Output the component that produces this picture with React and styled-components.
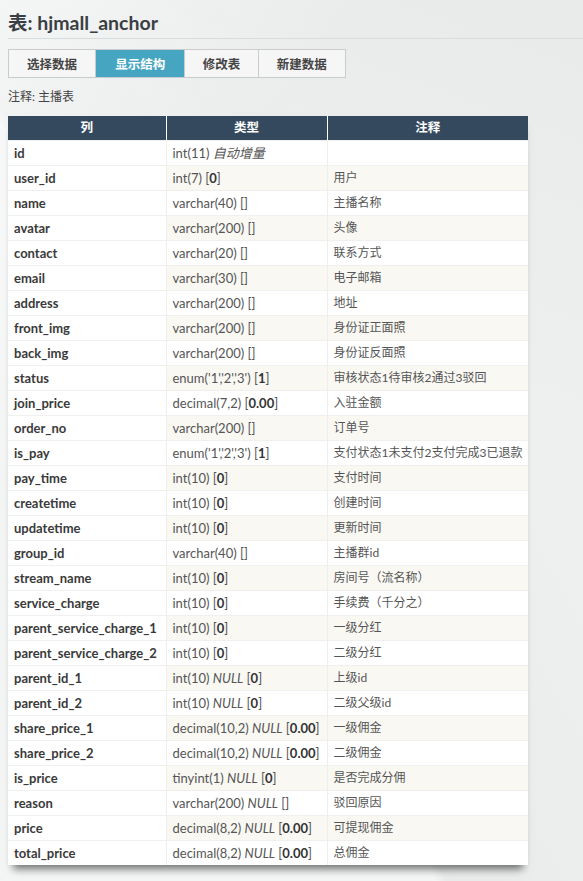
import React from "react";
import styled, { createGlobalStyle } from "styled-components";

const GlobalStyle = createGlobalStyle`
  html, body {
    margin: 0;
    padding: 0;
  }
  body {
    font-family: Lato, "Noto Sans CJK SC", sans-serif;
    font-size: 13px;
    color: #444;
    background-color: #eef0f0;
    background-image:
      linear-gradient(125deg, rgba(255,255,255,0.55) 0%, rgba(255,255,255,0) 30%),
      linear-gradient(200deg, rgba(0,0,0,0.025) 0%, rgba(0,0,0,0) 40%),
      linear-gradient(60deg, rgba(255,255,255,0.35) 40%, rgba(0,0,0,0.02) 41%, rgba(0,0,0,0) 70%);
    min-height: 881px;
  }
`;

const Page = styled.div`
  padding: 10px 0 0 0;
`;

const Title = styled.h2`
  margin: 0 0 0 8px;
  padding: 0 0 3px 0;
  font-size: 19.5px;
  font-weight: 700;
  color: #3a3f44;
  border-bottom: 1px solid #d9dcdc;
  line-height: 25px;
`;

const Tabs = styled.div`
  display: flex;
  margin: 10px 0 0 8px;
  width: 336px;
  border: 1px solid #c9cccc;
  background: #f6f6f6;
`;

const Tab = styled.div`
  width: ${p => p.w}px;
  height: 27px;
  display: flex;
  align-items: center;
  justify-content: center;
  font-size: 12.5px;
  font-weight: 700;
  color: ${p => (p.active ? "#fff" : "#444")};
  background: ${p => (p.active ? "#46a6c2" : "transparent")};
  border-left: ${p => (p.first ? "none" : "1px solid #c9cccc")};
`;

const Note = styled.div`
  margin: 11px 0 0 8px;
  font-size: 12px;
  line-height: 16px;
  color: #444;
`;

const Table = styled.table`
  margin: 11px 0 0 8px;
  border-collapse: collapse;
  table-layout: fixed;
  width: 520px;
  box-shadow: 0 9px 8px -5px rgba(0, 0, 0, 0.55);
`;

const Row = styled.tr`
  height: 25px;
`;

const HeadRow = styled.tr`
  height: 24px;
`;

const HeadCell = styled.th`
  background: #34495e;
  color: #fff;
  font-weight: 700;
  font-size: 12.5px;
  line-height: 16px;
  padding: 0;
  border-left: 1px solid #fff;
  &:first-child {
    border-left: none;
  }
`;

const NameCell = styled.th`
  background: #fff;
  text-align: left;
  font-weight: 700;
  color: #3a3a3a;
  line-height: 16px;
  padding: 0 6px;
  border-top: 1px solid #f0f0ee;
  white-space: nowrap;
`;

const Cell = styled.td`
  background: ${p => (p.odd ? "#f9f8f3" : "#fff")};
  color: #555;
  font-size: ${p => (p.note ? "12px" : "13px")};
  line-height: 16px;
  padding: 0 6px;
  border-top: 1px solid #f0f0ee;
  border-left: 1px solid #eeeeea;
  white-space: nowrap;
  i {
    font-style: italic;
  }
  b {
    font-weight: 700;
    color: #333;
  }
`;

const rows = [
  ["id", <>int(11) <i>自动增量</i></>, ""],
  ["user_id", <>int(7) [<b>0</b>]</>, "用户"],
  ["name", "varchar(40) []", "主播名称"],
  ["avatar", "varchar(200) []", "头像"],
  ["contact", "varchar(20) []", "联系方式"],
  ["email", "varchar(30) []", "电子邮箱"],
  ["address", "varchar(200) []", "地址"],
  ["front_img", "varchar(200) []", "身份证正面照"],
  ["back_img", "varchar(200) []", "身份证反面照"],
  ["status", <>enum('1','2','3') [<b>1</b>]</>, "审核状态1待审核2通过3驳回"],
  ["join_price", <>decimal(7,2) [<b>0.00</b>]</>, "入驻金额"],
  ["order_no", "varchar(200) []", "订单号"],
  ["is_pay", <>enum('1','2','3') [<b>1</b>]</>, "支付状态1未支付2支付完成3已退款"],
  ["pay_time", <>int(10) [<b>0</b>]</>, "支付时间"],
  ["createtime", <>int(10) [<b>0</b>]</>, "创建时间"],
  ["updatetime", <>int(10) [<b>0</b>]</>, "更新时间"],
  ["group_id", "varchar(40) []", "主播群id"],
  ["stream_name", <>int(10) [<b>0</b>]</>, "房间号（流名称）"],
  ["service_charge", <>int(10) [<b>0</b>]</>, "手续费（千分之）"],
  ["parent_service_charge_1", <>int(10) [<b>0</b>]</>, "一级分红"],
  ["parent_service_charge_2", <>int(10) [<b>0</b>]</>, "二级分红"],
  ["parent_id_1", <>int(10) <i>NULL</i> [<b>0</b>]</>, "上级id"],
  ["parent_id_2", <>int(10) <i>NULL</i> [<b>0</b>]</>, "二级父级id"],
  ["share_price_1", <>decimal(10,2) <i>NULL</i> [<b>0.00</b>]</>, "一级佣金"],
  ["share_price_2", <>decimal(10,2) <i>NULL</i> [<b>0.00</b>]</>, "二级佣金"],
  ["is_price", <>tinyint(1) <i>NULL</i> [<b>0</b>]</>, "是否完成分佣"],
  ["reason", <>varchar(200) <i>NULL</i> []</>, "驳回原因"],
  ["price", <>decimal(8,2) <i>NULL</i> [<b>0.00</b>]</>, "可提现佣金"],
  ["total_price", <>decimal(8,2) <i>NULL</i> [<b>0.00</b>]</>, "总佣金"],
];

const tabs = [
  { label: "选择数据", w: 87 },
  { label: "显示结构", w: 89, active: true },
  { label: "修改表", w: 73 },
  { label: "新建数据", w: 87 },
];

export default function App() {
  return (
    <Page>
      <GlobalStyle />
      <Title>表: hjmall_anchor</Title>
      <Tabs>
        {tabs.map((t, i) => (
          <Tab key={t.label} w={t.w} active={t.active} first={i === 0}>
            {t.label}
          </Tab>
        ))}
      </Tabs>
      <Note>注释: 主播表</Note>
      <Table>
        <colgroup>
          <col style={{ width: 158 }} />
          <col style={{ width: 161 }} />
          <col style={{ width: 201 }} />
        </colgroup>
        <thead>
          <HeadRow>
            <HeadCell>列</HeadCell>
            <HeadCell>类型</HeadCell>
            <HeadCell>注释</HeadCell>
          </HeadRow>
        </thead>
        <tbody>
          {rows.map((r, i) => (
            <Row key={r[0]}>
              <NameCell>{r[0]}</NameCell>
              <Cell odd={i % 2 === 1}>{r[1]}</Cell>
              <Cell odd={i % 2 === 1} note>{r[2]}</Cell>
            </Row>
          ))}
        </tbody>
      </Table>
    </Page>
  );
}
